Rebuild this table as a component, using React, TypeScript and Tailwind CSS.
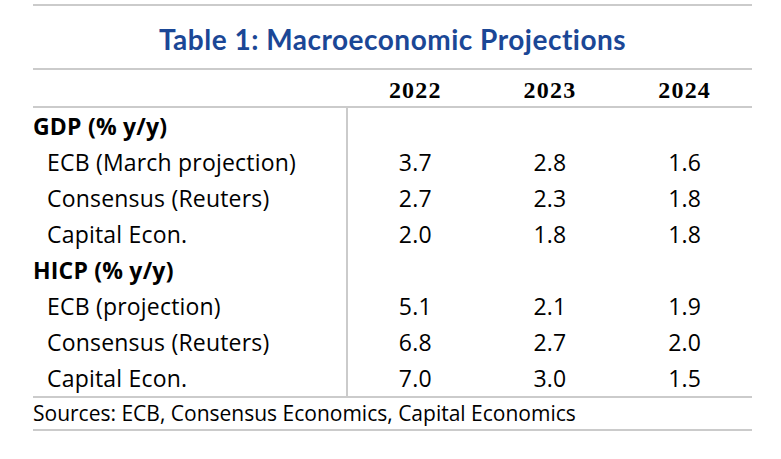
const rows: { label: string; values?: string[]; head?: boolean }[] = [
  { label: "GDP (% y/y)", head: true },
  { label: "ECB (March projection)", values: ["3.7", "2.8", "1.6"] },
  { label: "Consensus (Reuters)", values: ["2.7", "2.3", "1.8"] },
  { label: "Capital Econ.", values: ["2.0", "1.8", "1.8"] },
  { label: "HICP (% y/y)", head: true },
  { label: "ECB (projection)", values: ["5.1", "2.1", "1.9"] },
  { label: "Consensus (Reuters)", values: ["6.8", "2.7", "2.0"] },
  { label: "Capital Econ.", values: ["7.0", "3.0", "1.5"] },
];

const years = ["2022", "2023", "2024"];

export default function App() {
  return (
    <div className="min-h-[459px] w-full bg-white pt-[4px]">
      <div className="ml-[33px] w-[719px] font-['Open_Sans',sans-serif] text-black">
        {/* Title */}
        <div className="flex h-[66px] items-center justify-center border-y-2 border-[#cbcbcb] pt-[4px]">
          <h1 className="font-['Lato',sans-serif] text-[28px] font-bold tracking-[0.5px] text-[#1b4796]">
            Table 1: Macroeconomic Projections
          </h1>
        </div>

        {/* Years */}
        <div className="grid h-[38px] grid-cols-[315px_1fr_1fr_1fr] border-b-2 border-[#cbcbcb]">
          <div />
          {years.map((y) => (
            <div
              key={y}
              className="flex items-center justify-center pt-[2px] font-['Liberation_Serif',serif] text-[24px] font-bold tracking-[1.2px]"
            >
              {y}
            </div>
          ))}
        </div>

        {/* Body */}
        {rows.map((r, i) => (
          <div key={i} className="grid h-[36px] grid-cols-[315px_1fr_1fr_1fr]">
            <div
              className={`flex items-center border-r-2 border-[#cbcbcb] text-[23px] tracking-[0.2px] ${
                r.head ? "font-bold" : "pl-[14px]"
              }`}
            >
              {r.label}
            </div>
            {(r.values ?? ["", "", ""]).map((v, j) => (
              <div key={j} className="flex items-center justify-center text-[23px] tracking-[0.2px]">
                {v}
              </div>
            ))}
          </div>
        ))}

        {/* Sources */}
        <div className="flex h-[35px] items-center border-y-2 border-[#cbcbcb] text-[21px]">
          Sources: ECB, Consensus Economics, Capital Economics
        </div>
      </div>
    </div>
  );
}
